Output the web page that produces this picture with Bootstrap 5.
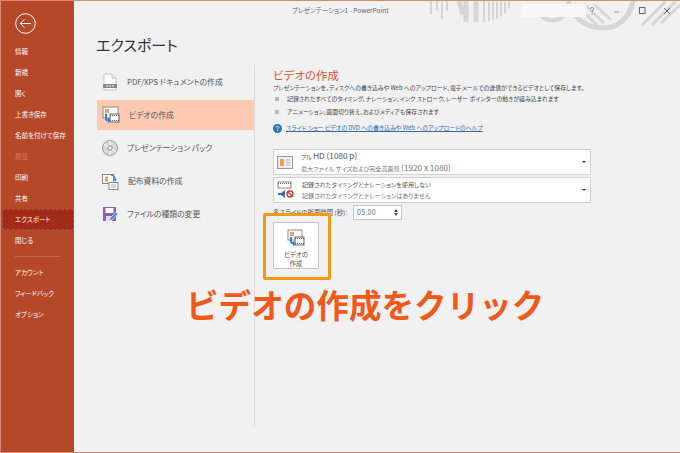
<!DOCTYPE html>
<html lang="ja">
<head>
  <meta charset="UTF-8">
  <title>エクスポート - PowerPoint</title>
  <link href="https://cdn.jsdelivr.net/npm/bootstrap@5.3.0/dist/css/bootstrap.min.css" rel="stylesheet">
  <style>
    html, body { height: 100%; overflow: hidden; }
    body { font-family: "Noto Sans CJK JP", "Noto Sans", sans-serif; font-feature-settings: "palt"; background: #f1f1f1; color: #444; }
    .app-frame { width: 680px; height: 453px; border-top: 1px solid #de8a72; border-bottom: 1px solid #de8a72; border-left: 1px solid #de8a72; position: relative; overflow: hidden; }
    .side-bar { width: 73px; background: #b54828; color: #fff; font-size: 6.5px; flex: none; padding-top: 12px; }
    .back-btn { margin: 0 0 0 14px; width: 21px; height: 21px; display: block; }
    .side-list { margin-top: 7px; }
    .side-item { height: 21px; line-height: 21px; padding-left: 14px; white-space: nowrap; }
    .side-item.is-off { color: #d9735a; }
    .side-item.is-on { background: #a32a16; outline: 1px dashed #8f5a48; outline-offset: -1px; margin-left: 1px; padding-left: 13px; }
    .side-rule { border-top: 1px solid #c9674a; margin: 5px 14px; }
    .work-area { min-width: 0; }
    .title-bar { height: 28px; font-size: 6.5px; color: #666; position: relative; }
    .title-text { position: absolute; left: 218px; top: 5px; }
    .page-title { font-size: 15px; font-weight: 400; color: #333; margin: 6px 0 0 22px; line-height: 20px; height: 30px; }
    .task-col { width: 181px; flex: none; padding-left: 23px; height: 362px; border-right: 1px solid #dcdcdc; }
    .task-row { height: 33px; display: flex; align-items: center; font-size: 7.8px; color: #555; padding-left: 5px; gap: 9px; width: 157px; white-space: nowrap; }
    .task-row.is-on { background: #fbcab0; height: 30px; margin: 1.5px 0 2px; }
    .task-row svg { flex: none; }
    .info-col { padding-left: 18px; padding-top: 2px; width: 340px; }
    .info-title { font-size: 11.5px; color: #d9583a; font-weight: 400; line-height: 16px; margin: 0; }
    .info-line { font-size: 5.9px; line-height: 10px; color: #444; white-space: nowrap; }
    .info-bullets { list-style: none; margin: 0; padding: 0; font-size: 5.9px; color: #444; }
    .info-bullets li { line-height: 12.5px; padding-left: 14px; position: relative; white-space: nowrap; }
    .info-bullets li::before { content: ""; position: absolute; left: 2px; top: 4px; width: 4px; height: 4px; background: #bbb; }
    .help-row { font-size: 5.95px; margin-top: 4px; height: 12px; }
    .help-row a { color: #2e6da8; }
    .pick-group { margin-top: 15px; }
    .pick-box { width: 318px; height: 26px; background: #fff; border: 1px solid #d2d2d2; margin-bottom: 2px; display: flex; align-items: center; padding-left: 3px; gap: 8px; position: relative; }
    .pick-text { font-size: 6.1px; line-height: 11.5px; white-space: nowrap; color: #555; }
    .pick-text .sub { color: #777; }
    .pick-arrow { position: absolute; right: 4px; top: 11px; border-left: 2px solid transparent; border-right: 2px solid transparent; border-top: 2px solid #333; }
    .latin-run { font-size: 8.2px; }
    .time-row { font-size: 6.4px; height: 15px; color: #555; gap: 6px; }
    .time-box { width: 49px; height: 15px; background: #fff; border: 1px solid #c8c8c8; font-size: 7px; line-height: 13px; padding-left: 3px; color: #666; position: relative; letter-spacing: .3px; }
    .time-box::before, .time-box::after { content: ""; position: absolute; right: 3px; border-left: 2px solid transparent; border-right: 2px solid transparent; }
    .time-box::before { top: 3px; border-bottom: 3px solid #444; }
    .time-box::after { bottom: 3px; border-top: 3px solid #444; }
    .make-btn { width: 46px; height: 47px; background: #fff; border: 1px solid #c6c6c6; margin-top: 2px; font-size: 6.4px; line-height: 9px; text-align: center; color: #555; padding-top: 6px; }
    .make-btn svg { display: block; margin: 0 auto 3px; }
    .call-frame { position: absolute; left: 262px; top: 212px; width: 68px; height: 67px; border: 3px solid #f39a12; border-radius: 2px; }
    .call-text { position: absolute; left: 185px; top: 282px; font-size: 32.6px; line-height: 42px; font-weight: 700; color: #f0591a; white-space: nowrap; font-feature-settings: normal; }
    .deco-art { position: absolute; left: 429px; top: 0; }
    .name-patch { position: absolute; left: 521px; top: 3px; width: 64px; height: 13px; background: #f8f8f8; }
    .win-ctrls { position: absolute; left: 584px; top: 3px; }
  </style>
</head>
<body>
  <div class="app-frame d-flex">

    <!-- Left menu -->
    <aside class="side-bar">
      <svg class="back-btn" viewBox="0 0 21 21" fill="none" stroke="#fff">
        <circle cx="10.5" cy="10.5" r="9.8"/>
        <path d="M16 10.5H5.5M9.5 6.3l-4.2 4.2 4.2 4.2" stroke-width="1"/>
      </svg>
      <div class="side-list">
        <div class="side-item">情報</div>
        <div class="side-item">新規</div>
        <div class="side-item">開く</div>
        <div class="side-item">上書き保存</div>
        <div class="side-item">名前を付けて保存</div>
        <div class="side-item is-off">履歴</div>
        <div class="side-item">印刷</div>
        <div class="side-item">共有</div>
        <div class="side-item is-on">エクスポート</div>
        <div class="side-item">閉じる</div>
        <div class="side-rule"></div>
        <div class="side-item">アカウント</div>
        <div class="side-item">フィードバック</div>
        <div class="side-item">オプション</div>
      </div>
    </aside>

    <!-- Window decoration sits behind the page content -->
    <svg class="deco-art" width="250" height="32" viewBox="430 0 250 32" fill="none" stroke="#d6d6d6">
      <path d="M431 0v13M437 0v10M442 0v18M447 0v10" stroke-width="2"/>
      <path d="M459 0l4 14M466 0v21M476 0v21" stroke-width="5"/>
      <path d="M484 0v21M489 0v20M493 0v19M497 0v18M501 0v15M505 0v12M509 0v7" stroke-width="2"/>
      <path d="M541 14a13 10 0 0 0 23 0" stroke-width="4"/>
      <path d="M568 0c4 16 18 27 35 27 15 0 27-10 30-27" stroke-width="5"/>
      <path d="M575 3l22 21M584 3l20 19M594 3l17 16" stroke-width="2.500"/>
      <path d="M642 24L666 0M652 24L676 0M661 22l19-18" stroke-width="3"/>
    </svg>
    <div class="name-patch"></div>

    <div class="work-area flex-grow-1 position-relative">
      <div class="title-bar">
        <span class="title-text">プレゼンテーション1 - PowerPoint</span>
      </div>
      <h1 class="page-title">エクスポート</h1>

      <div class="d-flex">
        <!-- Export tasks -->
        <div class="task-col">
          <div class="task-row">
            <svg width="16" height="18" viewBox="0 0 16 18"><path d="M2 1h8l4 4v12H2z" fill="#fff" stroke="#c4c4c4"/><path d="M10 1v4h4" fill="#eee" stroke="#c4c4c4"/><rect x="1" y="11" width="14" height="4" fill="#8a8a8a"/><path d="M4 13h2M7 13h2M10 13h2" stroke="#fff"/></svg>
            <span>PDF/XPS ドキュメントの作成</span>
          </div>
          <div class="task-row is-on">
            <svg width="18" height="18" viewBox="0 0 18 18"><rect x="1" y="1" width="15" height="11" fill="#fff" stroke="#8a8a8a"/><rect x="3" y="3" width="4" height="4" fill="#e9a06c"/><rect x="8" y="8" width="9" height="8" fill="#fff" stroke="#666"/><path d="M8 9.500h9M8 14.500h9" stroke="#555" stroke-dasharray="1 1"/><path d="M4 8v4.500c0 1.500 1 2 3 2" fill="none" stroke="#2f7fd0" stroke-width="2"/><path d="M6 12l3.500 2.500L6 17z" fill="#2f7fd0"/></svg>
            <span>ビデオの作成</span>
          </div>
          <div class="task-row">
            <svg width="16" height="16" viewBox="0 0 16 16"><circle cx="8" cy="8" r="7.500" fill="#d8d8d8" stroke="#999"/><circle cx="8" cy="8" r="2.200" fill="#f4f4f4" stroke="#888"/><path d="M8 1v4M8 11v4M2 4l4 3M14 12l-4-3" stroke="#fff"/></svg>
            <span>プレゼンテーション パック</span>
          </div>
          <div class="task-row">
            <svg width="17" height="17" viewBox="0 0 17 17"><rect x=".5" y="1.500" width="11" height="9" fill="#fff" stroke="#888"/><rect x="3" y="3.500" width="3" height="5" fill="#e8a44c"/><rect x="7" y="9.500" width="9" height="7" fill="#fff" stroke="#888"/><path d="M9 12h5M9 14h5" stroke="#aaa"/><path d="M9 2c3 0 4 1 4 5" fill="none" stroke="#3f86cc" stroke-width="1.500"/><path d="M11 6l2 2.500L15 6z" fill="#3f86cc"/></svg>
            <span>配布資料の作成</span>
          </div>
          <div class="task-row">
            <svg width="16" height="16" viewBox="0 0 16 16"><path d="M1 1h13v14H1z" fill="#8f5fb8"/><rect x="3.500" y="2" width="8" height="5" fill="#fff"/><rect x="4" y="10" width="6" height="5" fill="#e4d6ef"/><path d="M7 15l1-3 6-6 2 2-6 6z" fill="#4a90d4" stroke="#f1f1f1" stroke-width=".6"/></svg>
            <span>ファイルの種類の変更</span>
          </div>
        </div>

        <!-- Video details -->
        <div class="info-col">
          <h2 class="info-title">ビデオの作成</h2>
          <div class="info-line">プレゼンテーションを、ディスクへの書き込みや Web へのアップロード、電子メールでの送信ができるビデオとして保存します。</div>
          <ul class="info-bullets">
            <li>記録されたすべてのタイミング、ナレーション、インク ストローク、レーザー ポインターの動きが組み込まれます</li>
            <li>アニメーション、画面切り替え、およびメディアも保存されます</li>
          </ul>
          <div class="help-row d-flex align-items-center gap-1">
            <svg width="9" height="9" viewBox="0 0 9 9"><circle cx="4.500" cy="4.500" r="4.500" fill="#2f75b5"/><path d="M3.200 3.500c0-1.600 2.600-1.600 2.600 0 0 1-1.300 1-1.300 2" fill="none" stroke="#fff" stroke-width=".8"/><rect x="4.100" y="6.200" width=".9" height=".9" fill="#fff"/></svg>
            <a href="#">スライド ショー ビデオの DVD への書き込みや Web へのアップロードのヘルプ</a>
          </div>

          <div class="pick-group">
            <div class="pick-box">
              <svg width="16" height="13" viewBox="0 0 16 13"><rect x=".5" y=".5" width="15" height="12" fill="#eee" stroke="#999"/><rect x="3" y="3" width="4" height="7" fill="#e8a44c"/><path d="M9 4h4M9 6.500h4M9 9h4" stroke="#bbb"/></svg>
              <div class="pick-text">
                <div>フル <span class="latin-run">HD (1080 p)</span></div>
                <div class="sub">最大ファイル サイズおよび完全高画質 <span class="latin-run">(1920 x 1080)</span></div>
              </div>
              <span class="pick-arrow"></span>
            </div>
            <div class="pick-box">
              <svg width="17" height="18" viewBox="0 0 17 18"><rect x="1" y="1" width="13" height="6" fill="#fff" stroke="#888"/><path d="M1 2.500h13" stroke="#666" stroke-dasharray="1 1"/><path d="M1 12h3l4-3v8l-4-3H1z" fill="#2f75b5"/><circle cx="13" cy="13" r="3" fill="#fff" stroke="#d33a2c" stroke-width="1.400"/><path d="M11 11l4 4" stroke="#d33a2c" stroke-width="1.200"/></svg>
              <div class="pick-text">
                <div>記録されたタイミングとナレーションを使用しない</div>
                <div class="sub">記録されたタイミングとナレーションはありません</div>
              </div>
              <span class="pick-arrow"></span>
            </div>
            <div class="time-row d-flex align-items-center">
              <span>各スライドの所要時間 (秒):</span>
              <div class="time-box">05.00</div>
            </div>
            <div class="make-btn">
              <svg width="18" height="18" viewBox="0 0 18 18"><rect x="1" y="1" width="14" height="10" fill="#fff" stroke="#8a8a8a"/><rect x="3" y="3" width="4" height="4" fill="#e9a06c"/><rect x="8" y="8" width="9" height="8" fill="#fff" stroke="#666"/><path d="M8 9.500h9M8 14.500h9" stroke="#555" stroke-dasharray="1 1"/><path d="M4 8v4.500c0 1.500 1 2 3 2" fill="none" stroke="#2f7fd0" stroke-width="2"/><path d="M6 12l3.500 2.500L6 17z" fill="#2f7fd0"/></svg>
              ビデオの<br>作成
            </div>
          </div>
        </div>
      </div>
    </div>

    <svg class="win-ctrls" width="90" height="15" viewBox="0 0 90 15" fill="none" stroke="#666">
      <path d="M5.500 5c0-2 3-2 3 0 0 1.300-1.500 1.300-1.500 3M7 9.500v1" stroke-width=".8"/>
      <path d="M29 8h5" stroke="#999"/>
      <rect x="54.500" y="3.500" width="5.500" height="6"/>
      <path d="M79 4l6 6M85 4l-6 6"/>
    </svg>

    <!-- Callout over the screenshot -->
    <div class="call-frame"></div>
    <div class="call-text">ビデオの作成をクリック</div>
  </div>

  <script src="https://cdn.jsdelivr.net/npm/bootstrap@5.3.0/dist/js/bootstrap.bundle.min.js"></script>
</body>
</html>
